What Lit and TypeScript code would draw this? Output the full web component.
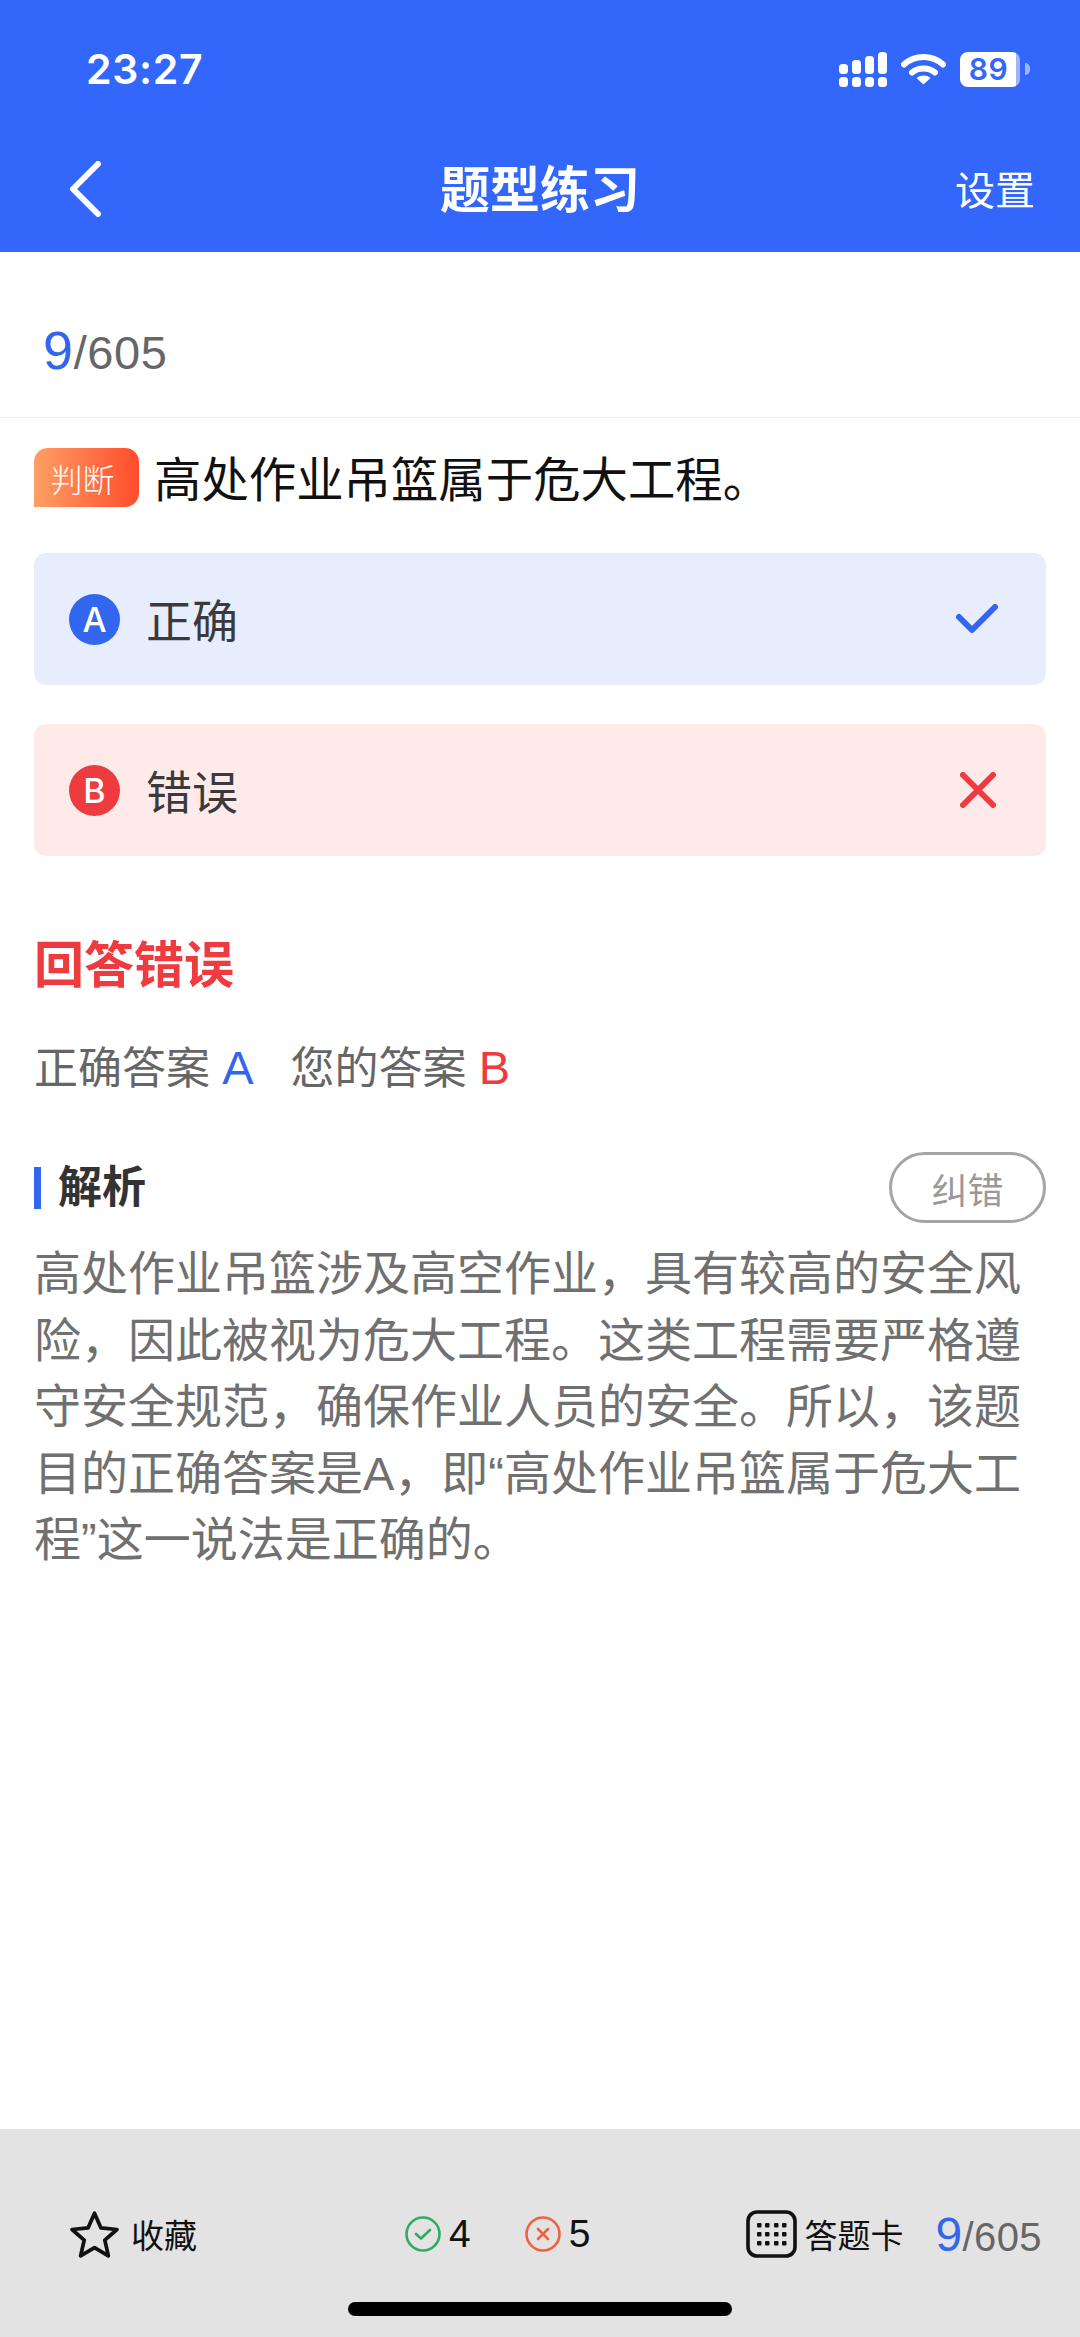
import { LitElement, html, svg, css } from 'lit';
import { customElement } from 'lit/decorators.js';

const analysis =
  '高处作业吊篮涉及高空作业，具有较高的安全风险，因此被视为危大工程。这类工程需要严格遵守安全规范，确保作业人员的安全。所以，该题目的正确答案是A，即“高处作业吊篮属于危大工程”这一说法是正确的。';

@customElement('app-root')
export class AppRoot extends LitElement {
  static styles = css`
    :host {
      display: block;
      width: 1080px;
      height: 2337px;
      background: #fff;
      font-family: 'Liberation Sans', 'Noto Sans CJK SC', sans-serif;
      color: #333;
    }
    .page {
      height: 2337px;
      display: flex;
      flex-direction: column;
    }
    header {
      background: #3366fa;
      color: #fff;
      flex: none;
    }
    .status {
      height: 138px;
      display: flex;
      align-items: center;
      padding: 0 50px 0 86px;
    }
    .time {
      font: 600 41px Inter, sans-serif;
      letter-spacing: 0.7px;
    }
    .status-icons {
      margin-left: auto;
      display: flex;
      align-items: center;
      gap: 14px;
    }
    .battery {
      width: 60px;
      height: 35px;
      border-radius: 8px;
      background: linear-gradient(90deg, #fff 93%, #9db6fb 93%);
      color: #3366fa;
      font: 600 30px Inter, sans-serif;
      display: flex;
      align-items: center;
      justify-content: center;
      padding-right: 3px;
      box-sizing: border-box;
      letter-spacing: 0.5px;
    }
    .nub {
      width: 5px;
      height: 12px;
      background: #9db6fb;
      border-radius: 0 5px 5px 0;
      margin-left: -9px;
    }
    .nav {
      height: 96px;
      padding-bottom: 18px;
      display: grid;
      grid-template-columns: 1fr auto 1fr;
      align-items: center;
    }
    .back {
      margin-left: 68px;
      display: block;
      transform: translateY(3px);
    }
    .title {
      font-size: 50px;
      font-weight: 700;
    }
    .setting {
      justify-self: end;
      margin-right: 45px;
      font-size: 40px;
      margin-top: 4px;
    }
    .counter {
      height: 166px;
      box-sizing: border-box;
      border-bottom: 1px solid #f0f0f0;
      padding: 31px 0 0 43px;
      display: flex;
      align-items: center;
      flex: none;
    }
    .count {
      color: #666;
      font-size: 47px;
      letter-spacing: 0.6px;
      white-space: nowrap;
    }
    .count b {
      color: #3366ee;
      font-weight: 400;
      font-size: 54px;
    }
    main {
      flex: 1;
      padding: 30px 34px 0;
    }
    .question {
      display: flex;
      align-items: flex-start;
      gap: 15px;
      height: 105px;
      color: #111;
      font-size: 47.4px;
    }
    .tag {
      width: 105px;
      height: 59px;
      padding-right: 8px;
      box-sizing: border-box;
      border-radius: 14px 14px 14px 0;
      background: linear-gradient(90deg, #ff9f63, #ff4d2c);
      color: #fff;
      font-size: 32px;
      font-weight: 300;
      display: flex;
      align-items: center;
      justify-content: center;
      flex: none;
    }
    .question span.text {
      line-height: 59px;
      margin-top: 3px;
      white-space: nowrap;
    }
    .option {
      height: 132px;
      border-radius: 12px;
      display: flex;
      align-items: center;
      padding: 0 46px 0 35px;
      font-size: 46px;
      color: #3a3a3a;
      margin-bottom: 39px;
    }
    .option.ok {
      background: #e7edfd;
    }
    .option.bad {
      background: #ffeaea;
    }
    .letter {
      width: 51px;
      height: 51px;
      border-radius: 50%;
      color: #fff;
      font: 500 34px Inter, sans-serif;
      display: flex;
      align-items: center;
      justify-content: center;
      margin-right: 26px;
    }
    .option .label {
      margin-top: -3px;
    }
    .ok .letter {
      background: #3366ee;
    }
    .bad .letter {
      background: #ee3b3f;
    }
    .option svg {
      margin-left: auto;
    }
    .verdict {
      color: #ee3b3f;
      font-size: 50px;
      font-weight: 700;
      line-height: 60px;
      margin-top: 80px;
    }
    .answers {
      margin-top: 42px;
      font-size: 44px;
      line-height: 60px;
      color: #666;
      display: flex;
      gap: 37px;
    }
    .answers i {
      font-style: normal;
      font-size: 47px;
    }
    .answers .a {
      color: #3366ee;
    }
    .answers .b {
      color: #ee3b3f;
    }
    .analysis-head {
      margin-top: 53px;
      display: flex;
      align-items: center;
      height: 71px;
    }
    .analysis-head h2 {
      margin: 0;
      font-size: 44px;
      line-height: 42px;
      font-weight: 700;
      color: #333;
      border-left: 7px solid #3366ee;
      padding-left: 17px;
    }
    .report {
      margin-left: auto;
      width: 157px;
      height: 71px;
      box-sizing: border-box;
      border: 3px solid #a5a5a5;
      border-radius: 36px;
      color: #999;
      font-size: 36px;
      display: flex;
      align-items: center;
      justify-content: center;
    }
    .analysis {
      margin: 18px 0 0;
      font-size: 47px;
      line-height: 66.5px;
      color: #707070;
    }
    footer {
      flex: none;
      height: 208px;
      background: #e3e3e3;
      color: #111;
      display: flex;
      flex-direction: column;
      align-items: center;
    }
    .bar {
      width: 100%;
      box-sizing: border-box;
      display: flex;
      align-items: center;
      margin-top: 81px;
      height: 48px;
      padding: 0 38px 0 70px;
    }
    .group {
      display: flex;
      align-items: center;
    }
    .fav {
      gap: 12px;
      font-size: 33px;
    }
    .tally {
      margin-left: 208px;
      font-size: 39px;
      gap: 8px;
    }
    .tally .num + svg {
      margin-left: 46px;
    }
    .card {
      margin-left: auto;
      gap: 7px;
      font-size: 33px;
    }
    .mini {
      margin-left: 25px;
      color: #666;
      font-size: 40px;
      letter-spacing: 0.4px;
      white-space: nowrap;
    }
    .mini b {
      color: #3366ee;
      font-weight: 400;
      font-size: 48px;
    }
    .home {
      width: 384px;
      height: 14px;
      border-radius: 7px;
      background: #000;
      margin-top: 44px;
    }
  `;

  private signal() {
    return html`<svg width="48" height="35" viewBox="0 0 48 35" fill="#fff">
      <rect x="0" y="12" width="9" height="10" rx="3.5"></rect>
      <rect x="13" y="8" width="9" height="14" rx="3.5"></rect>
      <rect x="26" y="4" width="9" height="18" rx="3.5"></rect>
      <rect x="39" y="0" width="9" height="22" rx="3.5"></rect>
      <rect x="0" y="25" width="9" height="10" rx="3.5"></rect>
      <rect x="13" y="25" width="9" height="10" rx="3.5"></rect>
      <rect x="26" y="25" width="9" height="10" rx="3.5"></rect>
      <rect x="39" y="25" width="9" height="10" rx="3.5"></rect>
    </svg>`;
  }

  private wifi() {
    return html`<svg width="45" height="32" viewBox="0 0 45 32" fill="none" stroke="#fff">
      <path d="M3 11.5C14 1.5 31 1.5 42 11.5" stroke-width="6" stroke-linecap="round"></path>
      <path d="M11 19.5C17 14 28 14 34 19.5" stroke-width="6" stroke-linecap="round"></path>
      <path d="M22.5 31.5L15.5 25C19.5 21.7 25.5 21.7 29.5 25Z" fill="#fff" stroke="none"></path>
    </svg>`;
  }

  render() {
    return html`<div class="page">
      <header>
        <div class="status">
          <span class="time">23:27</span>
          <div class="status-icons">
            ${this.signal()} ${this.wifi()}
            <span class="battery">89</span>
            <span class="nub"></span>
          </div>
        </div>
        <div class="nav">
          <svg class="back" width="36" height="56" viewBox="0 0 36 56" fill="none">
            <path d="M30 3L5 28L30 53" stroke="#fff" stroke-width="6" stroke-linecap="round" stroke-linejoin="round"></path>
          </svg>
          <span class="title">题型练习</span>
          <span class="setting">设置</span>
        </div>
      </header>
      <div class="counter">
        <span class="count"><b>9</b>/605</span>
      </div>
      <main>
        <div class="question">
          <span class="tag">判断</span>
          <span class="text">高处作业吊篮属于危大工程。</span>
        </div>
        <div class="option ok">
          <span class="letter">A</span>
          <span class="label">正确</span>
          <svg width="42" height="30" viewBox="0 0 42 30" fill="none" style="margin-right:2px">
            <path d="M3 13L16 26L39 3" stroke="#3366ee" stroke-width="6" stroke-linecap="round" stroke-linejoin="round"></path>
          </svg>
        </div>
        <div class="option bad">
          <span class="letter">B</span>
          <span class="label">错误</span>
          <svg width="36" height="36" viewBox="0 0 36 36" fill="none" style="margin-right:4px">
            <path d="M3 3L33 33M33 3L3 33" stroke="#ee3b3f" stroke-width="6" stroke-linecap="round"></path>
          </svg>
        </div>
        <div class="verdict">回答错误</div>
        <div class="answers">
          <span>正确答案 <i class="a">A</i></span>
          <span>您的答案 <i class="b">B</i></span>
        </div>
        <div class="analysis-head">
          <h2>解析</h2>
          <span class="report">纠错</span>
        </div>
        <p class="analysis">${analysis}</p>
      </main>
      <footer>
        <div class="bar">
          <div class="group fav">
            <svg width="49" height="49" viewBox="0 0 47 47" fill="none">
              <path d="M23.5 3L29.7 17.2L45 18.7L33.4 28.9L36.8 44L23.5 36.2L10.2 44L13.6 28.9L2 18.7L17.3 17.2Z" stroke="#111" stroke-width="3.6" stroke-linejoin="round"></path>
            </svg>
            <span>收藏</span>
          </div>
          <div class="group tally">
            <svg width="36" height="36" viewBox="0 0 36 36" fill="none" stroke="#2eac62" stroke-width="2.6">
              <circle cx="18" cy="18" r="16.5"></circle>
              <path d="M11 18L16 22.5L25 14" stroke-linecap="round" stroke-linejoin="round"></path>
            </svg>
            <span class="num">4</span>
            <svg width="36" height="36" viewBox="0 0 36 36" fill="none" stroke="#f0623f" stroke-width="2.6">
              <circle cx="18" cy="18" r="16.5"></circle>
              <path d="M13 13L23 23M23 13L13 23" stroke-linecap="round"></path>
            </svg>
            <span class="num">5</span>
          </div>
          <div class="group card">
            <svg width="51" height="48" viewBox="0 0 51 48" fill="none">
              <rect x="2" y="2" width="47" height="44" rx="9" stroke="#111" stroke-width="3.6"></rect>
              <g fill="#111">
                ${[15, 24, 33].map((y) =>
                  [13, 21, 30, 38].map(
                    (x) => svg`<rect x=${x - 2} y=${y - 2} width="4.5" height="4.5" rx="1"></rect>`,
                  ),
                )}
              </g>
            </svg>
            <span>答题卡</span>
            <span class="mini"><b>9</b>/605</span>
          </div>
        </div>
        <div class="home"></div>
      </footer>
    </div>`;
  }
}
